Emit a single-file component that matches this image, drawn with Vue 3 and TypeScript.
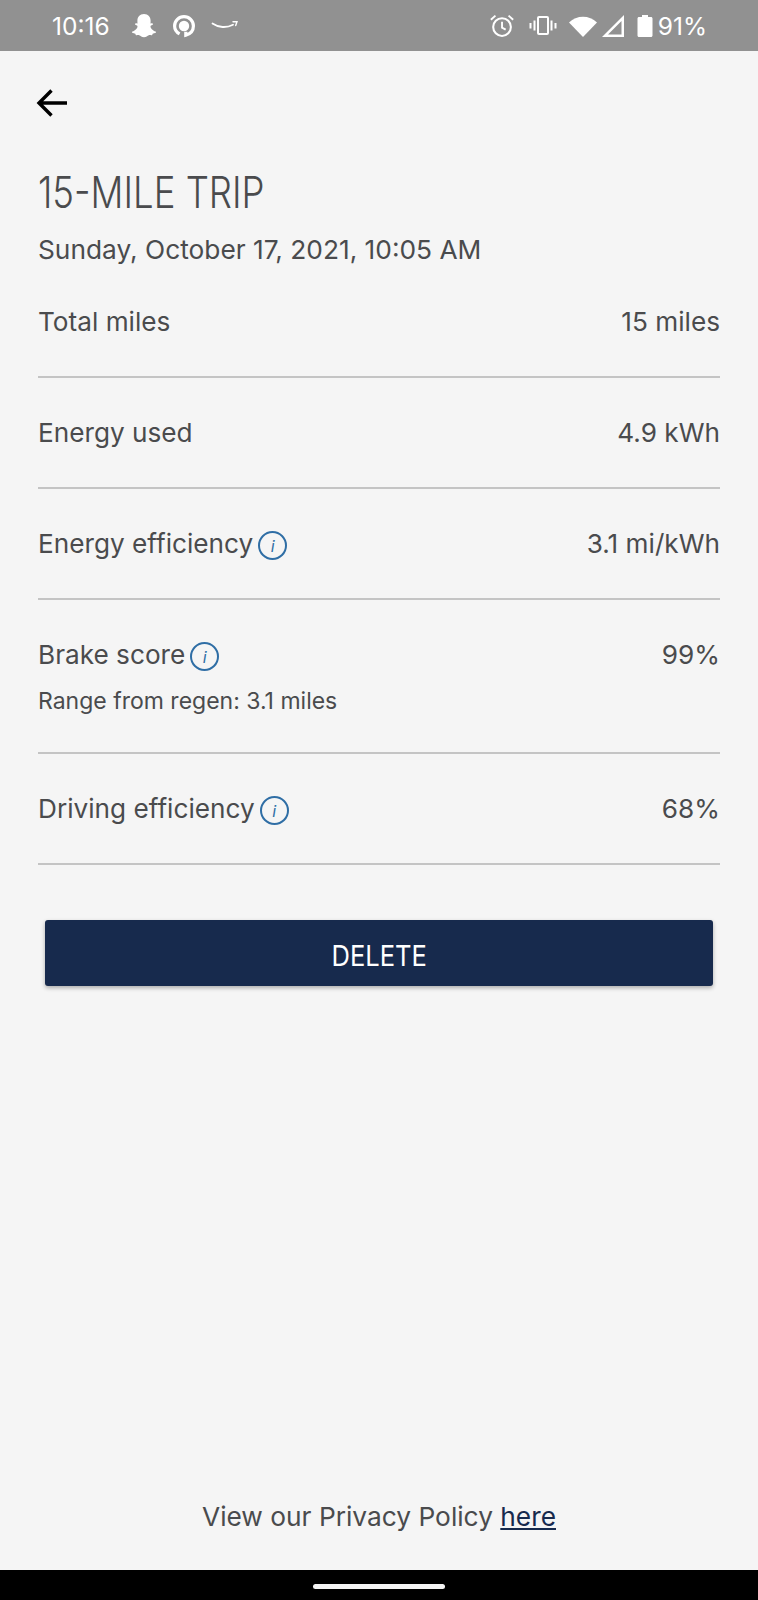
<script setup lang="ts">
type Row = { label: string; value: string; info?: boolean; note?: string };

const rows: Row[] = [
  { label: "Total miles", value: "15 miles" },
  { label: "Energy used", value: "4.9 kWh" },
  { label: "Energy efficiency", value: "3.1 mi/kWh", info: true },
  { label: "Brake score", value: "99%", info: true, note: "Range from regen: 3.1 miles" },
  { label: "Driving efficiency", value: "68%", info: true },
];
</script>

<template>
  <div class="screen">
    <header class="status">
      <div class="status-left">
        <span class="time">10:16</span>
        <svg class="snap" viewBox="0 0 26 26" width="26" height="26">
          <path fill="#fff" d="M13 1c4.300 0 6.600 3.100 6.600 6.600 0 1 0 2-.1 2.800.7.200 1.500-.4 2.100 0 .7.500.3 1.300-.4 1.700-.7.400-1.700.6-1.700 1.300 0 1.700 2.700 4.400 5 5 .7.200.7.900.2 1.300-.8.600-2.200.7-3 1-.4.500-.2 1.300-.8 1.500-.9.200-2-.3-3.100 0-1.500.4-2.500 2-4.800 2s-3.300-1.600-4.800-2c-1.100-.3-2.200.2-3.100 0-.6-.2-.4-1-.8-1.500-.8-.3-2.200-.4-3-1-.5-.4-.5-1.100.2-1.300 2.300-.6 5-3.300 5-5 0-.7-1-.9-1.700-1.300-.7-.4-1.100-1.200-.4-1.700.6-.4 1.400.2 2.100 0-.1-.8-.1-1.800-.1-2.800C6.400 4.100 8.700 1 13 1z" />
        </svg>
        <svg class="alexa" viewBox="0 0 24 24" width="24" height="24">
          <path fill="none" stroke="#fff" stroke-width="3.200" d="M12 2.600a9.400 9.400 0 0 1 9.400 9.400c0 4.500-3.100 7.900-7.600 9.200v-3.400M12 2.600A9.400 9.400 0 0 0 2.600 12c0 3.700 2.100 6.400 5 7.900" />
          <circle cx="12" cy="12" r="5.200" fill="#fff" />
        </svg>
        <svg class="amazon" viewBox="0 0 28 14" width="28" height="14">
          <path fill="none" stroke="#fff" stroke-width="1.800" stroke-linecap="round" d="M1.500 4.500c6 4.200 14 4.700 20.500 1.200" />
          <path fill="none" stroke="#fff" stroke-width="1.400" stroke-linecap="round" d="M22 2.800h4l-1.300 3.800" />
        </svg>
      </div>
      <div class="status-right">
        <svg class="alarm" viewBox="0 0 24 24" width="25" height="25">
          <circle cx="12.500" cy="13.500" r="8.500" fill="none" stroke="#fff" stroke-width="2" />
          <path fill="none" stroke="#fff" stroke-width="1.800" d="M12.500 8.500v5.500l3.500 2M1.800 6.500l4.400-4M23.200 6.500l-4.400-4" />
        </svg>
        <svg class="vibrate" viewBox="0 0 28 24" width="28" height="24">
          <rect x="9" y="3" width="10" height="17" rx="1" fill="none" stroke="#fff" stroke-width="2" />
          <path fill="none" stroke="#fff" stroke-width="2" d="M5.500 6.500v10M22.500 6.500v10M1.500 9v5.500M26.500 9v5.500" />
        </svg>
        <svg class="wifi" viewBox="0 0 30 24" width="30" height="24">
          <path fill="#fff" d="M15 23 1 8.500C5 4.800 9.800 2.800 15 2.800s10 2 14 5.700z" />
        </svg>
        <svg class="signal" viewBox="0 0 24 24" width="24" height="24">
          <path fill="#fff" d="M23 1v22H1zM20.500 7 7 20.500h13.500z" fill-rule="evenodd" />
        </svg>
        <svg class="battery" viewBox="0 0 16 24" width="16" height="24">
          <path fill="#fff" d="M5 1h6v2h3c.8 0 1.500.7 1.500 1.500v17c0 .8-.7 1.500-1.500 1.500H2c-.8 0-1.500-.7-1.500-1.500v-17C.5 3.700 1.200 3 2 3h3z" />
        </svg>
        <span class="percent">91%</span>
      </div>
    </header>

    <main class="content">
      <button class="back" type="button" aria-label="Back">
        <svg viewBox="0 0 32 32" width="32" height="32">
          <path fill="none" stroke="#000" stroke-width="3.400" d="M31 16H4M15.500 3.500 3 16l12.500 12.500" />
        </svg>
      </button>

      <h1 class="title">15-MILE TRIP</h1>
      <p class="date">Sunday, October 17, 2021, 10:05 AM</p>

      <ul class="rows">
        <li v-for="row in rows" :key="row.label" class="row">
          <div class="line">
            <span class="label">
              {{ row.label }}
              <span v-if="row.info" class="info"><i>i</i></span>
            </span>
            <span class="value">{{ row.value }}</span>
          </div>
          <p v-if="row.note" class="note">{{ row.note }}</p>
        </li>
      </ul>

      <button class="delete" type="button"><span>DELETE</span></button>

      <p class="privacy">View our Privacy Policy <a href="#">here</a></p>
    </main>

    <footer class="nav"><span class="handle"></span></footer>
  </div>
</template>

<style>
html,
body {
  margin: 0;
  background: #f5f5f5;
}
</style>

<style scoped>
.screen {
  display: flex;
  flex-direction: column;
  width: 758px;
  height: 1600px;
  background: #f5f5f5;
  font-family: Inter, "Noto Sans", sans-serif;
  color: #4a4b4d;
}

.status {
  display: flex;
  justify-content: space-between;
  align-items: center;
  height: 51px;
  padding: 0 52px;
  box-sizing: border-box;
  background: #919191;
  color: #fff;
  flex: none;
}

.status-left,
.status-right {
  display: flex;
  align-items: center;
}

.time {
  font-size: 24.500px;
  margin-right: 21px;
}

.snap {
  margin-right: 15px;
}

.alexa {
  margin-right: 15px;
}

.status-right {
  gap: 5px;
  margin-right: -1px;
}

.alarm {
  margin-right: 2px;
}

.vibrate {
  margin-left: 8px;
  margin-right: 1px;
}

.wifi {
  margin-left: 5px;
}

.signal {
  margin-left: -2px;
}

.battery {
  margin-left: 7px;
}

.percent {
  font-size: 24.500px;
}

.content {
  display: flex;
  flex-direction: column;
  flex: 1;
  padding: 0 38px;
}

.back {
  width: 32px;
  height: 32px;
  margin: 36px 0 0 -2px;
  padding: 0;
  border: 0;
  background: none;
}

.title {
  margin: 45px 0 0;
  font-size: 44px;
  line-height: 56px;
  font-weight: 300;
  transform: scaleX(0.83);
  transform-origin: left;
  white-space: nowrap;
}

.date {
  margin: 12px 0 0;
  font-size: 26.300px;
  line-height: 36px;
}

.rows {
  list-style: none;
  margin: 0;
  padding: 0;
}

.row {
  padding: 37px 0 36px;
  border-bottom: 2px solid #c4c4c4;
}

.row:first-child {
  padding-top: 36px;
}

.line {
  display: flex;
  justify-content: space-between;
  align-items: center;
  font-size: 26.200px;
  line-height: 36px;
}

.label {
  display: flex;
  align-items: center;
  gap: 5px;
}

.info {
  display: inline-flex;
  justify-content: center;
  align-items: center;
  width: 25px;
  height: 25px;
  border: 2px solid #2f6ea5;
  border-radius: 50%;
  color: #2f6ea5;
  font-size: 16px;
  line-height: 1;
  margin-top: 3px;
}

.note {
  margin: 13px 0 0;
  font-size: 23px;
  line-height: 30px;
  color: #4a4b4d;
}

.delete {
  height: 66px;
  margin: 55px 7px 0;
  padding: 5px 0 0;
  border: 0;
  border-radius: 3px;
  background: #172a4d;
  color: #fff;
  font-family: inherit;
  font-size: 29px;
  box-shadow: 0 2px 4px rgba(0, 0, 0, 0.3);
}

.delete span {
  display: inline-block;
  transform: scaleX(0.88);
}

.privacy {
  margin: auto 0 35px;
  text-align: center;
  font-size: 26.300px;
  line-height: 36px;
}

.privacy a {
  color: #172a4d;
}

.nav {
  display: flex;
  justify-content: center;
  flex: none;
  height: 30px;
  background: #000;
}

.handle {
  width: 132px;
  height: 5px;
  margin-top: 14px;
  border-radius: 3px;
  background: #f5f5f5;
}
</style>
